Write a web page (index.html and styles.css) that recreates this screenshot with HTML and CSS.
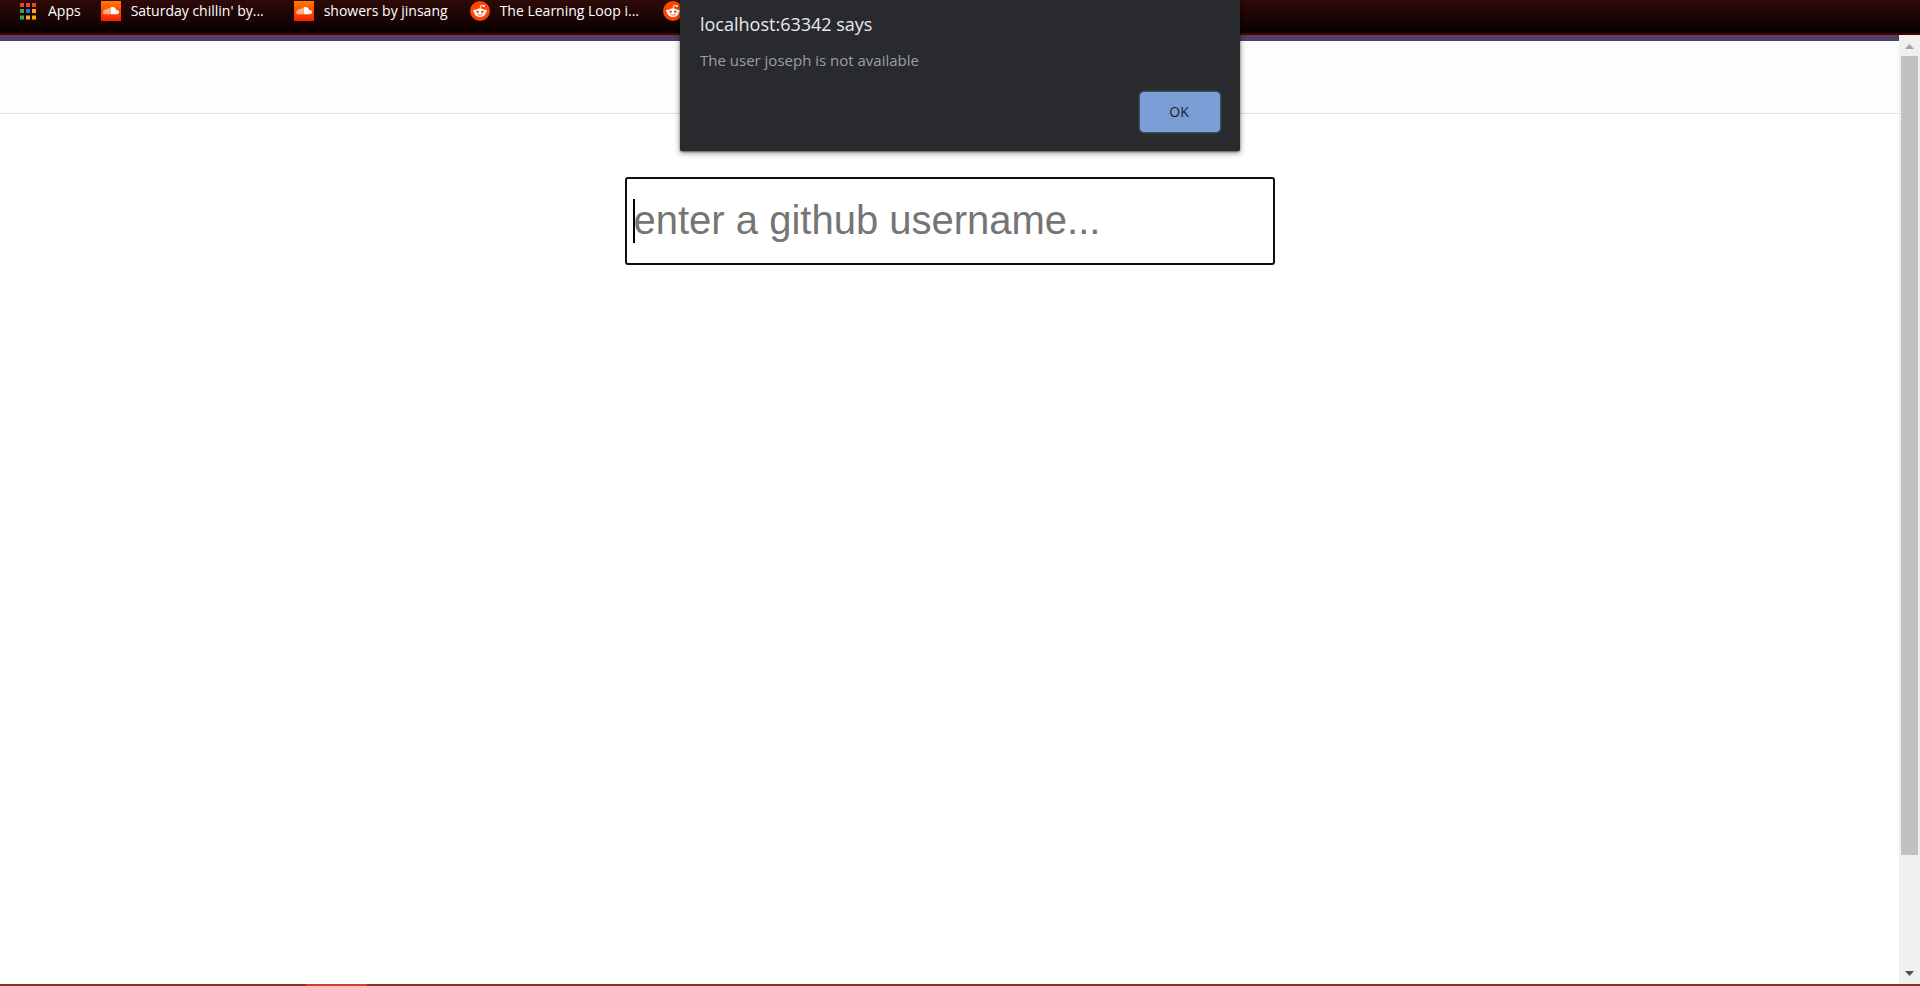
FILE: index.html
```html
<!DOCTYPE html>
<html lang="en">
<head>
<meta charset="utf-8">
<title>GitHub user search</title>
<link rel="stylesheet" href="styles.css">
</head>
<body>
<svg class="defs" width="0" height="0" aria-hidden="true">
  <defs>
    <linearGradient id="cloud-bg" x1="0" y1="0" x2="0" y2="1">
      <stop offset="0" stop-color="#ff7a00"/>
      <stop offset="1" stop-color="#ff1e00"/>
    </linearGradient>
    <symbol id="cloud" viewBox="0 0 20 20">
      <rect width="20" height="20" fill="url(#cloud-bg)"/>
      <path d="M2 11.200q0-1.500 1.200-1.700l.6-.7 1-.2.600-.8 1.200.1.600-.6 1.300.3.900-1v6.600H3.400Q2 13 2 11.200z" fill="#ffb08c"/>
      <path d="M9.600 6.600C12 5.300 14.700 6.700 15.100 9.200 16.800 8.700 18 9.900 18 11.200c0 1.200-.9 2-2 2H9.600z" fill="#fff"/>
    </symbol>
    <symbol id="robot" viewBox="0 0 20 20">
      <circle cx="10" cy="10" r="10" fill="#ff4500"/>
      <circle cx="4.600" cy="10" r="1.500" fill="#fff"/>
      <circle cx="15.400" cy="10" r="1.500" fill="#fff"/>
      <ellipse cx="10" cy="11.800" rx="5.800" ry="4.200" fill="#fff"/>
      <path d="M10 8l.9-3.700 3 .7" fill="none" stroke="#fff" stroke-width=".9"/>
      <circle cx="14" cy="5" r="1.100" fill="#fff"/>
      <circle cx="7.700" cy="10.800" r="1.200" fill="#ff4500"/>
      <circle cx="12.300" cy="10.800" r="1.200" fill="#ff4500"/>
      <path d="M7.600 13.600q2.400 1.500 4.800 0" fill="none" stroke="#ff4500" stroke-width=".8" stroke-linecap="round"/>
    </symbol>
  </defs>
</svg>

<nav class="bookmarks" aria-label="Bookmarks">
  <a class="bookmark apps" href="#">
    <svg width="16" height="17" viewBox="0 0 16 17" aria-hidden="true">
      <path d="M0 0h4v4H0zM6 0h4v4H6zM12 0h4v4h-4z" fill="#ea4335"/>
      <path d="M0 6h4v4H0zM0 12.500h4v4H0z" fill="#34a853"/>
      <path d="M6 6h4v4H6z" fill="#1a73e8"/>
      <path d="M12 6h4v4h-4zM6 12.500h4v4H6zM12 12.500h4v4h-4z" fill="#fbaf05"/>
    </svg>
    <span>Apps</span>
  </a>
  <a class="bookmark wide" href="#"><svg width="20" height="20" aria-hidden="true"><use href="#cloud"/></svg><span>Saturday chillin' by...</span></a>
  <a class="bookmark medium" href="#"><svg width="20" height="20" aria-hidden="true"><use href="#cloud"/></svg><span>showers by jinsang</span></a>
  <a class="bookmark wide" href="#"><svg width="20" height="20" aria-hidden="true"><use href="#robot"/></svg><span>The Learning Loop i...</span></a>
  <a class="bookmark" href="#" aria-label="Bookmark"><svg width="20" height="20" aria-hidden="true"><use href="#robot"/></svg></a>
</nav>

<div class="viewport">
  <main class="page">
    <header class="topbar"></header>
    <form class="search">
      <div class="field">
        <input class="username" type="text" aria-label="GitHub username" placeholder="enter a github username...">
        <span class="caret"></span>
      </div>
    </form>
  </main>
  <div class="scrollbar" aria-hidden="true">
    <svg class="arrow" width="9" height="5" viewBox="0 0 9 5"><path d="M4.500 0L9 5H0z" fill="#a3a3a3"/></svg>
    <div class="track"><div class="thumb"></div></div>
    <svg class="arrow" width="9" height="5" viewBox="0 0 9 5"><path d="M0 0h9L4.500 5z" fill="#505050"/></svg>
  </div>
</div>
<footer class="taskbar"><span class="active-task"></span></footer>

<dialog class="alert" open aria-labelledby="alert-title">
  <h1 class="alert-title" id="alert-title">localhost:63342 says</h1>
  <p class="alert-text">The user joseph is not available</p>
  <button class="ok" type="button">OK</button>
</dialog>
</body>
</html>
```
FILE: styles.css
```css
* {
  box-sizing: border-box;
}

body {
  margin: 0;
  height: 100vh;
  display: flex;
  flex-direction: column;
  overflow: hidden;
  background: #fff;
  font-family: "Segoe UI", "Open Sans", "Noto Sans", sans-serif;
}

.defs {
  position: absolute;
}

.bookmarks {
  display: flex;
  gap: 20px;
  height: 35px;
  padding: 1px 20px 0;
  background: linear-gradient(#2e0a08, #0a0000);
  border-bottom: 2px solid #480000;
}

.bookmark {
  display: flex;
  align-items: center;
  gap: 10px;
  height: 20px;
  color: #fff;
  font-size: 14px;
  line-height: 20px;
  text-decoration: none;
  white-space: nowrap;
}

.bookmark svg {
  flex: none;
}

.apps {
  gap: 12px;
}

.medium {
  width: 156px;
}

.wide {
  width: 173px;
}

.viewport {
  flex: 1;
  display: flex;
  min-height: 0;
}

.page {
  flex: 1;
}

.topbar {
  height: 79px;
  border-top: 6px solid #4f4066;
  border-bottom: 1px solid #e1e1e1;
  background: #fdfdfd;
}

.search {
  display: flex;
  justify-content: center;
  padding-top: 63px;
}

.field {
  position: relative;
  width: 650px;
}

.username {
  display: block;
  width: 100%;
  height: 88px;
  padding: 0 7px 2px;
  border: 2px solid #101010;
  border-radius: 3px;
  background: #fff;
  font-family: Arial, "Liberation Sans", sans-serif;
  font-size: 40px;
  outline: none;
}

.username::placeholder {
  color: #757575;
  opacity: 1;
}

.caret {
  position: absolute;
  left: 8px;
  top: 22px;
  width: 2px;
  height: 44px;
  background: #000;
}

.scrollbar {
  display: flex;
  flex-direction: column;
  align-items: center;
  width: 21px;
  padding: 9px 2px 8px;
  background: #f0f0f0;
}

.arrow {
  display: block;
  flex: none;
}

.track {
  flex: 1;
  width: 17px;
  padding: 7px 0;
}

.thumb {
  height: 88%;
  background: #c1c1c1;
}

.taskbar {
  height: 2px;
  padding-left: 306px;
  background: #8f301c;
}

.active-task {
  display: block;
  width: 61px;
  height: 2px;
  background: #cb4227;
}

.alert {
  position: absolute;
  top: 0;
  left: 0;
  right: 0;
  display: flex;
  flex-direction: column;
  width: 560px;
  margin: 0 auto;
  padding: 12px 20px 19px;
  border: 0;
  border-radius: 0 0 2px 2px;
  background: #292a2d;
  box-shadow: 0 1px 2px rgba(0, 0, 0, 0.5), 0 2px 6px rgba(0, 0, 0, 0.4);
}

.alert-title {
  margin: 0;
  color: #e8eaed;
  font-size: 18px;
  font-weight: 400;
  line-height: 24px;
}

.alert-text {
  margin: 12px 0 20px;
  color: #9aa0a6;
  font-size: 15px;
  line-height: 24px;
}

.ok {
  align-self: flex-end;
  width: 80px;
  height: 40px;
  padding: 0 2px 2px 0;
  border: 1px solid #7ba3de;
  border-radius: 4px;
  background: #7a9dd6;
  box-shadow: 0 0 2px 1px rgba(122, 157, 214, 0.4);
  color: #202124;
  font-family: inherit;
  font-size: 14px;
  font-weight: 500;
}
```
